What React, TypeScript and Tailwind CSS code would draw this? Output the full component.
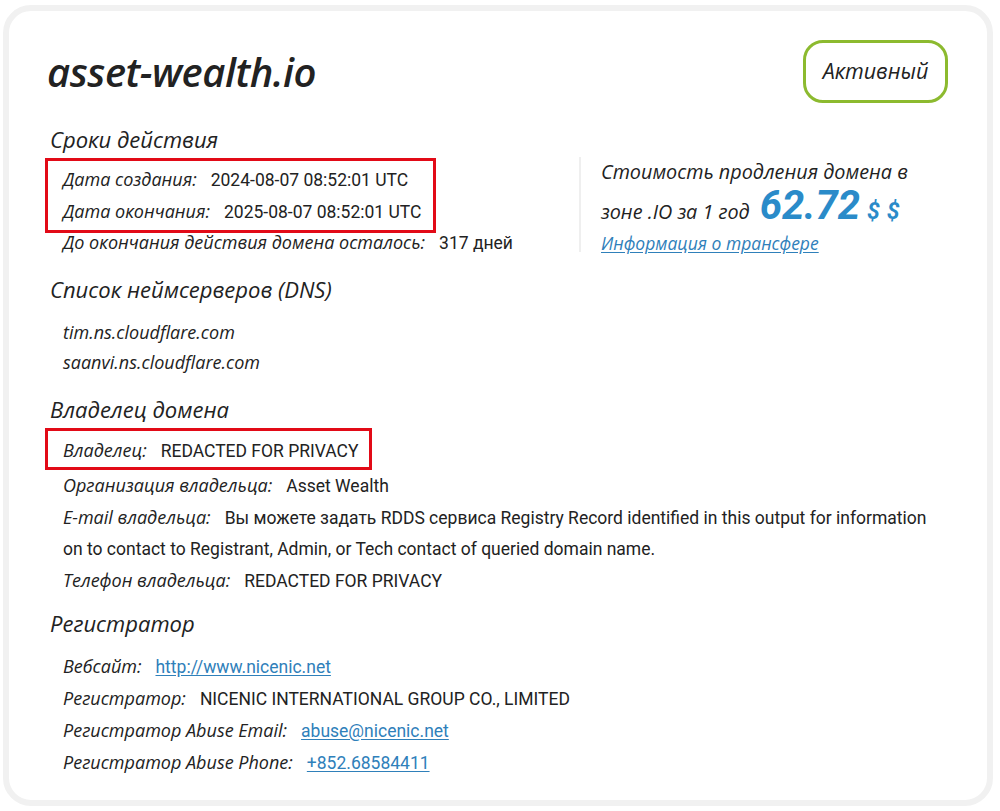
const label = "font-['Open_Sans',sans-serif] italic text-[18px] text-[#222]";
const value = "font-['Roboto',sans-serif] text-[17.5px] text-[#222]";
const link = "font-['Roboto',sans-serif] text-[17.5px] text-[#2f80ba] underline underline-offset-2";

function Row({ name, children }: { name: string; children: React.ReactNode }) {
  return (
    <div className="leading-[31px]">
      <span className={label}>{name}</span>
      <span className="ml-[14px]">{children}</span>
    </div>
  );
}

function Heading({ children }: { children: React.ReactNode }) {
  return (
    <h2 className="ml-[3px] font-['Open_Sans',sans-serif] italic text-[22px] leading-[30px] text-[#222]">
      {children}
    </h2>
  );
}

export default function App() {
  return (
    <div className="min-h-screen bg-white pt-[5px] pl-[3px]">
      <div className="w-[990px] h-[801px] rounded-[28px] border-[6px] border-[#f1f1f1] bg-white px-[38px] pt-[29px]">
        {/* Header */}
        <div className="flex items-center justify-between h-[63px]">
          <h1 className="font-['Open_Sans',sans-serif] italic font-semibold text-[40px] tracking-[-0.5px] text-[#222]">
            asset-wealth.io
          </h1>
          <div className="mr-[1px] w-[145px] h-[63px] rounded-[20px] border-[3px] border-[#8cba2f] flex items-center justify-center font-['Open_Sans',sans-serif] italic text-[21.5px] text-[#222]">
            Активный
          </div>
        </div>

        {/* Сроки действия */}
        <div className="mt-[21px]">
          <Heading>Сроки действия</Heading>
          <div className="flex mt-[4px]">
            <div className="w-[532px]">
              <div className="w-fit -ml-[2px] border-[3px] border-[#e20a17] pl-[15px] pr-[12px] pt-[3px] pb-[2px]">
                <Row name="Дата создания:"><span className={value}>2024-08-07 08:52:01 UTC</span></Row>
                <Row name="Дата окончания:"><span className={value}>2025-08-07 08:52:01 UTC</span></Row>
              </div>
              <div className="pl-[16px] -mt-[6px]">
                <Row name="До окончания действия домена осталось:"><span className={value}>317 дней</span></Row>
              </div>
            </div>
            <div className="border-l-2 border-[#efefef] pl-[20px] h-[95px] -mt-[1px]">
              <p className="font-['Open_Sans',sans-serif] italic text-[19.8px] leading-[34px] text-[#222] mt-[-2px]">
                Стоимость продления домена в
              </p>
              <p className="flex items-baseline font-['Open_Sans',sans-serif] italic text-[19.8px] leading-[34px] text-[#222]">
                зоне .IO за 1 год
                <span className="ml-[10px] font-['Roboto',sans-serif] font-bold italic text-[40px] leading-[34px] text-[#2a8bc9]">62.72</span>
                <span className="ml-[7px] font-['Roboto',sans-serif] font-bold italic text-[23px] tracking-[7px] text-[#2a8bc9]">$$</span>
              </p>
              <a className="font-['Open_Sans',sans-serif] italic text-[17.5px] leading-[28px] text-[#2f80ba] underline underline-offset-2">
                Информация о трансфере
              </a>
            </div>
          </div>
        </div>

        {/* DNS */}
        <div className="mt-[15px]">
          <Heading>Список неймсерверов (DNS)</Heading>
          <div className="pl-[16px] mt-[13px]">
            <div className={`${label} leading-[30px]`}>tim.ns.cloudflare.com</div>
            <div className={`${label} leading-[30px]`}>saanvi.ns.cloudflare.com</div>
          </div>
        </div>

        {/* Владелец */}
        <div className="mt-[17px]">
          <Heading>Владелец домена</Heading>
          <div className="w-fit -ml-[2px] mt-[4px] border-[3px] border-[#e20a17] pl-[15px] pr-[10px] pt-[4px] pb-0">
            <Row name="Владелец:"><span className={value}>REDACTED FOR PRIVACY</span></Row>
          </div>
          <div className="pl-[16px] pr-[12px]">
            <Row name="Организация владельца:"><span className={value}>Asset Wealth</span></Row>
            <Row name="E-mail владельца:">
              <span className={value}>
                Вы можете задать RDDS сервиса Registry Record identified in this output for information on to contact to Registrant, Admin, or Tech contact of queried domain name.
              </span>
            </Row>
            <Row name="Телефон владельца:"><span className={value}>REDACTED FOR PRIVACY</span></Row>
          </div>
        </div>

        {/* Регистратор */}
        <div className="mt-[11px]">
          <Heading>Регистратор</Heading>
          <div className="pl-[16px] mt-[13px]">
            <Row name="Вебсайт:"><a className={link}>http://www.nicenic.net</a></Row>
            <Row name="Регистратор:"><span className={value}>NICENIC INTERNATIONAL GROUP CO., LIMITED</span></Row>
            <Row name="Регистратор Abuse Email:"><a className={link}>abuse@nicenic.net</a></Row>
            <Row name="Регистратор Abuse Phone:"><a className={link}>+852.68584411</a></Row>
          </div>
        </div>
      </div>
    </div>
  );
}
